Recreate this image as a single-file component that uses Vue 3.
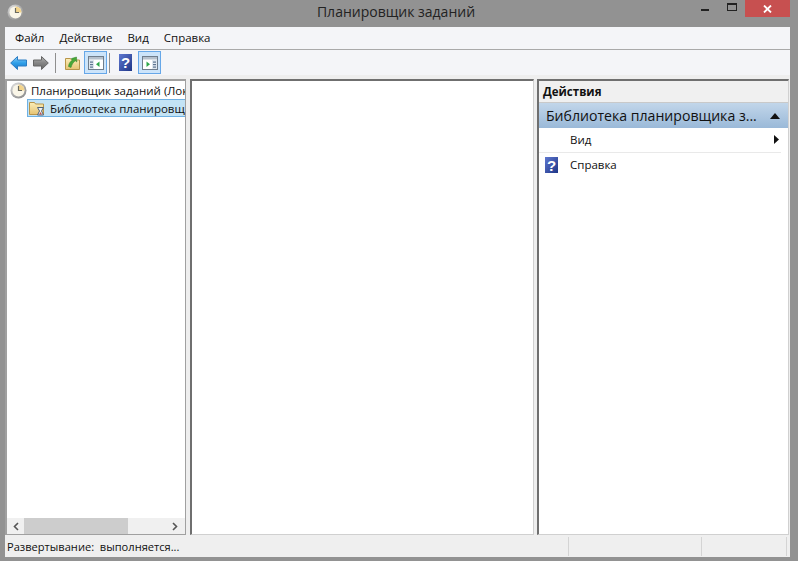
<script setup>
const menus = ['Файл', 'Действие', 'Вид', 'Справка']
</script>

<template>
  <div class="win">
    <svg class="defs" width="0" height="0">
      <defs>
        <linearGradient id="blueArrow" x1="0" y1="0" x2="0" y2="1">
          <stop offset="0" stop-color="#8fd0f8" /><stop offset=".5" stop-color="#2f9fe8" /><stop offset="1" stop-color="#1c78c8" />
        </linearGradient>
        <linearGradient id="greyArrow" x1="0" y1="0" x2="0" y2="1">
          <stop offset="0" stop-color="#b4b4b4" /><stop offset=".5" stop-color="#858585" /><stop offset="1" stop-color="#666" />
        </linearGradient>
        <linearGradient id="folder" x1="0" y1="0" x2="0" y2="1">
          <stop offset="0" stop-color="#fbeeb8" /><stop offset="1" stop-color="#e6c373" />
        </linearGradient>
        <linearGradient id="help" x1="0" y1="0" x2="1" y2="1">
          <stop offset="0" stop-color="#5f78d0" /><stop offset="1" stop-color="#1e3586" />
        </linearGradient>
        <radialGradient id="ring" cx=".35" cy=".3" r=".9">
          <stop offset="0" stop-color="#e8e8e8" /><stop offset="1" stop-color="#7c7c7c" />
        </radialGradient>
      </defs>
    </svg>
    <header class="title">
      <svg class="appicon" width="17" height="17" viewBox="0 0 17 17">
        <circle cx="8.500" cy="8.500" r="8" fill="url(#ring)" />
        <circle cx="8.500" cy="8.500" r="6" fill="#faf6e8" />
        <path d="M8.500 2.500a6 6 0 0 1 6 6h-6z" fill="#f3d48c" />
        <path d="M8.500 4v4.500h3.500" stroke="#6b6b60" stroke-width="1.200" fill="none" />
      </svg>
      <span class="title-text">Планировщик заданий</span>
      <div class="controls">
        <span class="minbtn"><i></i></span>
        <span class="maxbtn"><i></i></span>
        <span class="closebtn">
          <svg width="9" height="8" viewBox="0 0 9 8"><path d="M1 .5l7 7M8 .5l-7 7" stroke="#fff" stroke-width="1.800" /></svg>
        </span>
      </div>
    </header>
    <div class="client">
      <nav class="menu">
        <span v-for="m in menus" :key="m">{{ m }}</span>
      </nav>
      <div class="toolbar">
        <svg class="tb first" width="17" height="14" viewBox="0 0 17 14">
          <path d="M7.500.5L.7 7l6.800 6.500V10h9V4h-9z" fill="url(#blueArrow)" stroke="#2a7cc4" />
        </svg>
        <svg class="tb" width="16" height="14" viewBox="0 0 16 14">
          <path d="M8.500.5L15.300 7l-6.800 6.500V10H.5V4h8z" fill="url(#greyArrow)" stroke="#666" />
        </svg>
        <i class="sep sep1"></i>
        <svg class="tb" width="15" height="15" viewBox="0 0 15 15">
          <path d="M.5 3.500h5l1 1.500h8v9.500H.5z" fill="url(#folder)" stroke="#b8954a" />
          <path d="M3.500 11.500c.3-3 1.700-5 3.800-6.300L6.300 3.600 11.500 2 11.800 7l-1.500-1.200C8.500 7 7 9 6 12.500z" fill="#48a838" stroke="#2e7e28" stroke-width=".5" />
        </svg>
        <span class="toggle t1">
          <svg width="16" height="14" viewBox="0 0 16 14">
            <rect x=".5" y=".5" width="15" height="13" fill="#fff" stroke="#6f7d8c" />
            <rect x="1" y="1" width="14" height="2.500" fill="#b5c0cc" />
            <rect x="1" y="4" width="5" height="9" fill="#dfe7ef" />
            <rect x="2" y="5.500" width="3" height="1.200" fill="#5d748f" />
            <rect x="2" y="8" width="3" height="1.200" fill="#5d748f" />
            <rect x="2" y="10.500" width="3" height="1.200" fill="#5d748f" />
            <path d="M11.500 5.500v5.500L8 8.250z" fill="#2fa84a" />
          </svg>
        </span>
        <i class="sep sep2"></i>
        <svg class="tb" width="13" height="17" viewBox="0 0 13 17">
          <rect width="13" height="17" fill="url(#help)" />
          <text x="6.500" y="14" text-anchor="middle" class="q">?</text>
        </svg>
        <span class="toggle t2">
          <svg width="16" height="14" viewBox="0 0 16 14">
            <rect x=".5" y=".5" width="15" height="13" fill="#fff" stroke="#6f7d8c" />
            <rect x="1" y="1" width="14" height="2.500" fill="#b5c0cc" />
            <rect x="10" y="4" width="5" height="9" fill="#dfe7ef" />
            <rect x="11" y="5.500" width="3" height="1.200" fill="#5d748f" />
            <rect x="11" y="8" width="3" height="1.200" fill="#5d748f" />
            <rect x="11" y="10.500" width="3" height="1.200" fill="#5d748f" />
            <path d="M4.500 5.500v5.500L8 8.250z" fill="#2fa84a" />
          </svg>
        </span>
      </div>
      <main class="panes">
        <section class="pane tree">
          <div class="tree-body">
            <div class="node root">
              <svg width="17" height="17" viewBox="0 0 17 17">
                <circle cx="8.500" cy="8.500" r="8" fill="url(#ring)" />
                <circle cx="8.500" cy="8.500" r="6" fill="#faf6e8" />
                <path d="M8.500 2.500a6 6 0 0 1 6 6h-6z" fill="#f3d48c" />
                <path d="M8.500 4v4.500h3.500" stroke="#6b6b60" stroke-width="1.200" fill="none" />
              </svg>
              <span>Планировщик заданий (Локальный)</span>
            </div>
            <div class="node lib">
              <svg width="16" height="16" viewBox="0 0 16 16">
                <path d="M.5 2.500h5l1 1.500h8v10.500H.5z" fill="url(#folder)" stroke="#b8954a" />
                <path d="M8.500 7.500h6l-2 3.500 2 4h-6l2-4z" fill="#eef2f6" stroke="#4f6278" />
                <path d="M10 14.500h3l-1.500-2.500z" fill="#c0504d" />
              </svg>
              <span>Библиотека планировщика заданий</span>
            </div>
          </div>
          <div class="hscroll">
            <svg width="6" height="9" viewBox="0 0 6 9"><path d="M5 1L1.500 4.500 5 8" stroke="#555" stroke-width="1.600" fill="none" /></svg>
            <div class="track"><div class="thumb"></div></div>
            <svg width="6" height="9" viewBox="0 0 6 9"><path d="M1 1l3.500 3.500L1 8" stroke="#555" stroke-width="1.600" fill="none" /></svg>
          </div>
        </section>
        <section class="pane center"></section>
        <section class="pane actions">
          <div class="act-head">Действия</div>
          <div class="act-group">
            <span>Библиотека планировщика з...</span>
            <svg width="10" height="6" viewBox="0 0 10 6"><path d="M5 0l5 6H0z" fill="#111" /></svg>
          </div>
          <div class="act-row view">
            <span>Вид</span>
            <svg width="5" height="9" viewBox="0 0 5 9"><path d="M0 0l5 4.500L0 9z" fill="#111" /></svg>
          </div>
          <div class="act-row help-row">
            <svg width="13" height="16" viewBox="0 0 13 16">
              <rect width="13" height="16" fill="url(#help)" />
              <text x="6.500" y="13.500" text-anchor="middle" class="q">?</text>
            </svg>
            <span>Справка</span>
          </div>
        </section>
      </main>
      <footer class="status">
        <span class="st st1">Развертывание:&nbsp; выполняется...</span>
        <span class="st st2"></span>
        <span class="st st3"></span>
        <span class="st st4"></span>
      </footer>
    </div>
  </div>
</template>

<style>
html, body { margin: 0; background: #929292; }
</style>

<style scoped>
.win {
  width: 798px; height: 561px; background: #929292; display: flex; flex-direction: column;
  font-family: "Open Sans", "Noto Sans", sans-serif; color: #111; overflow: hidden;
}
.defs { position: absolute; }
svg { flex: none; }
.title { height: 27px; flex: none; display: flex; align-items: flex-start; position: relative; }
.appicon { margin: 4px 0 0 7px; }
.title-text { position: absolute; left: 0; width: 792px; text-align: center; top: 2px; font-size: 14px; color: #222; }
.controls { position: absolute; right: 8px; top: 0; display: flex; }
.minbtn { width: 26px; height: 17px; position: relative; }
.minbtn i { position: absolute; left: 9px; top: 9px; width: 8px; height: 2px; background: #222; }
.maxbtn { width: 27px; height: 17px; position: relative; }
.maxbtn i { position: absolute; left: 9px; top: 3px; width: 8px; height: 5px; border: 1px solid #222; border-top-width: 2px; }
.closebtn { width: 45px; height: 17px; background: #c75050; display: flex; align-items: center; justify-content: center; }
.client { margin: 0 8px 4px 5px; flex: 1; min-height: 0; display: flex; flex-direction: column; background: #eeeeee; }
.menu { height: 20px; padding-bottom: 2px; flex: none; display: flex; gap: 15px; align-items: center; padding-left: 10px; background: #f4f5f8; border-bottom: 1px solid #a9a9a9; font-size: 11.500px; }
.toolbar { height: 25px; flex: none; display: flex; align-items: center; padding-left: 5px; background: #f4f5f8; }
.first { margin-right: 6px; }
.sep { width: 1px; height: 20px; background: #8f8f8f; }
.sep1 { margin: 0 9px 0 6px; }
.sep2 { margin: 0 9px 0 2px; }
.toggle { width: 23px; height: 23px; box-sizing: border-box; background: #cce4fa; border: 1px solid #66a7e8; display: flex; align-items: center; justify-content: center; }
.t1 { margin-left: 4px; }
.t2 { margin-left: 6px; }
.q { font: bold 15px "Liberation Sans", sans-serif; fill: #fff; }
.panes { flex: 1; min-height: 0; display: flex; padding-top: 4px; }
.pane { background: #fff; box-sizing: border-box; min-width: 0; }
.tree { width: 181px; border: 2px solid #a0a0a0; border-right-width: 1px; border-bottom-width: 1px; display: flex; flex-direction: column; overflow: hidden; }
.tree-body { flex: 1; overflow: hidden; }
.node { display: flex; align-items: center; white-space: nowrap; font-size: 11.500px; }
.root { height: 18px; padding-left: 3px; gap: 4px; }
.lib { height: 16px; margin-left: 20px; padding-left: 1px; gap: 5px; background: #c3e3f5; border: 1px solid #6fb1e3; border-right: 0; }
.hscroll { height: 16px; flex: none; display: flex; align-items: center; background: #f0f0f0; padding: 0 7px 0 6px; }
.track { flex: 1; height: 16px; margin: 0 5px; }
.thumb { width: 104px; height: 16px; background: #cdcdcd; }
.center { width: 344px; margin-left: 4px; border: 2px solid #6f6f6f; border-right: 1px solid #d0d0d0; border-bottom: 1px solid #d0d0d0; }
.actions { width: 252px; margin-left: 3px; border: 2px solid #6f6f6f; border-right: 1px solid #d0d0d0; border-bottom: 1px solid #d0d0d0; font-size: 11.500px; }
.act-head { height: 21px; display: flex; align-items: center; padding-left: 4px; background: #f0f0f0; border-bottom: 1px solid #c9c9c9; font-weight: 700; }
.act-group { height: 25px; display: flex; align-items: center; justify-content: space-between; padding: 0 8px 0 7px; background: linear-gradient(#c2d6ea, #9ab9d8); font-size: 14.100px; }
.act-row { display: flex; align-items: center; position: relative; }
.view { height: 25px; box-sizing: border-box; padding: 0 2px 1px 31px; margin-right: 7px; justify-content: space-between; border-bottom: 1px solid #e9e9e9; }
.help-row { height: 26px; padding-left: 6px; gap: 12px; padding-bottom: 3px; box-sizing: border-box; }
.status { height: 22px; flex: none; display: flex; background: #efefef; font-size: 11.100px; padding-top: 2px; box-sizing: border-box; }
.st { box-sizing: border-box; border-right: 1px solid #d4d4d4; display: flex; align-items: center; padding-left: 2px; height: 19px; }
.st1 { width: 564px; }
.st2 { width: 133px; }
.st3 { width: 85px; }
.st4 { width: 3px; border: 0; padding: 0; }
</style>
